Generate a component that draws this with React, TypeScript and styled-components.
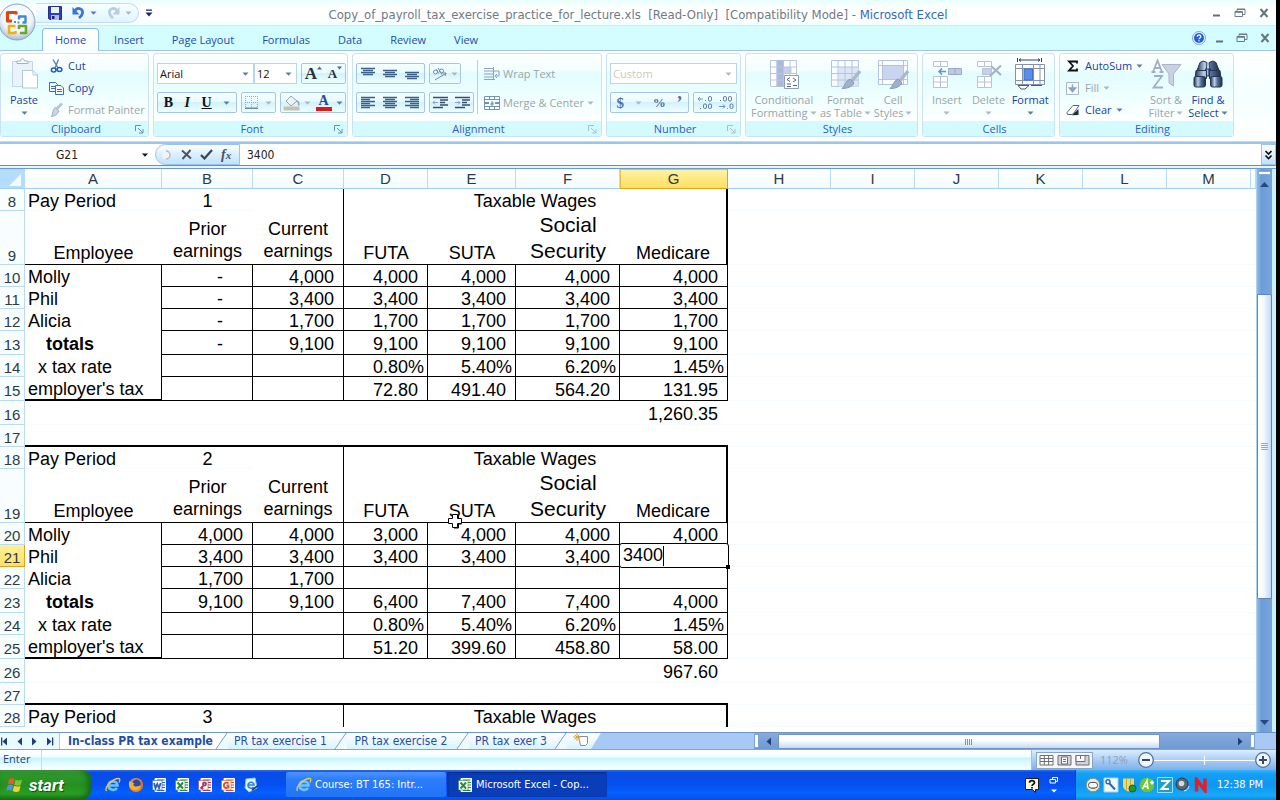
import React from 'react';
import styled, { createGlobalStyle, css } from 'styled-components';

const UI = '"Open Sans", "Noto Sans", sans-serif';
const TAHOMA = '"DejaVu Sans Condensed", "DejaVu Sans", sans-serif';
const ARIAL = '"Liberation Sans", Arial, sans-serif';

const Global = createGlobalStyle`
  *, *::before, *::after { box-sizing: border-box; }
  html, body { margin: 0; height: 100%; background: #fff; }
  body { font: 11px/14px ${UI}; color: #153f96; }
  button, input, select { font: inherit; color: inherit; margin: 0; padding: 0; border: 0; border-radius: 0; background: none; }
  svg { display: block; flex: none; }
`;

const Window = styled.div`
  position: relative;
  display: flex;
  flex-direction: column;
  height: 100vh;
  overflow: hidden;
  border-right: 4px solid #000;
`;

/* ---------- title bar ---------- */
const TitleBar = styled.header`
  display: grid;
  grid-template-columns: 1fr auto 1fr;
  align-items: center;
  height: 26px;
  background: linear-gradient(#e9ffff, #fff 30%, #fff 70%, #f4ffff);
  border-bottom: 1px solid #d3e9f7;
`;
const QuickAccess = styled.div`
  display: flex;
  align-items: center;
  justify-self: start;
  gap: 6px;
  margin-left: 36px;
`;
const QuickPill = styled.div`
  display: flex;
  align-items: center;
  gap: 5px;
  height: 20px;
  width: 103px;
  padding-left: 12px;
  border: 1px solid #c3dcf3;
  border-left: 0;
  border-radius: 0 10px 10px 0;
  background: linear-gradient(#f7ffff, #dff6ff);
`;
const IconButton = styled.button`
  display: flex;
  align-items: center;
  justify-content: center;
`;
const Title = styled.h1`
  margin: 0;
  padding-top: 4px;
  font: 13px/20px ${TAHOMA};
  color: #6f7a86;
  white-space: pre;
  b { font-weight: 400; color: #2f68c4; }
`;
const WindowButtons = styled.div`
  display: flex;
  align-items: center;
  justify-self: end;
  gap: 13px;
  padding-right: 7px;
`;

/* ---------- ribbon ---------- */
const TabRow = styled.nav`
  display: flex;
  align-items: flex-end;
  gap: 2px;
  height: 25px;
  padding-left: 42px;
  background: #d4fdff;
  border-bottom: 1px solid #9fc4ea;
`;
const RibbonTab = styled.button<{ $active?: boolean }>`
  height: 23px;
  padding: 0 12px;
  margin-bottom: -1px;
  border: 1px solid transparent;
  border-bottom: 0;
  color: #1d4bab;
  ${p => p.$active && css`
    border-color: #8db9ec;
    border-radius: 4px 4px 0 0;
    background: linear-gradient(#fff, #f6ffff);
  `}
`;
const TabRight = styled.div`
  display: flex;
  align-items: center;
  align-self: center;
  gap: 9px;
  margin-left: auto;
  ${WindowButtons} { gap: 12px; padding-right: 6px; }
`;
const Ribbon = styled.div`
  display: flex;
  gap: 4px;
  height: 91px;
  padding: 2px 0 5px;
  background: linear-gradient(#fff, #f5ffff 50%, #fff);
  border-bottom: 1px solid #bcdcf5;
`;
const GroupBox = styled.section<{ $w: number }>`
  display: flex;
  flex-direction: column;
  width: ${p => p.$w}px;
  height: 84px;
  border: 1px solid #c9e2f4;
  border-radius: 3px;
  background: linear-gradient(#fdffff, #f2feff 20%, #e2fcff 24%, #f0ffff 55%, #fff 82%);
  overflow: hidden;
`;
const GroupBody = styled.div<{ $pad?: number }>`
  display: flex;
  flex: 1;
  padding: 0 ${p => p.$pad ?? 3}px;
`;
const GroupLabel = styled.footer`
  display: flex;
  align-items: center;
  height: 15px;
  padding: 1px 4px 0 16px;
  background: #d3fbff;
  color: #2a5fc4;
  span { flex: 1; text-align: center; }
`;
const Large = styled.button<{ $w: number; $off?: boolean }>`
  display: flex;
  flex-direction: column;
  align-items: center;
  width: ${p => p.$w}px;
  padding-top: 4px;
  line-height: 13px;
  white-space: nowrap;
  color: ${p => (p.$off ? '#9aa5a8' : '#173f9c')};
  svg { margin-bottom: 3px; }
  i svg { margin: 0; }
`;
const DropLine = styled.i`
  display: flex;
  align-items: center;
  justify-content: center;
  gap: 2px;
  min-height: 13px;
  font-style: normal;
`;
const SmallList = styled.div<{ $w: number }>`
  display: flex;
  flex-direction: column;
  width: ${p => p.$w}px;
  padding: 1px 0 0 2px;
`;
const Small = styled.button<{ $off?: boolean }>`
  display: flex;
  align-items: center;
  gap: 4px;
  height: 22px;
  white-space: nowrap;
  color: ${p => (p.$off ? '#9aa5a8' : '#173f9c')};
`;
const Rows = styled.div`
  display: flex;
  flex-direction: column;
  gap: 8px;
  padding-top: 9px;
`;
const Row = styled.div`
  display: flex;
  gap: 4px;
`;
const Cluster = styled.div<{ $w: number }>`
  display: flex;
  align-items: center;
  justify-content: space-around;
  width: ${p => p.$w}px;
  height: 21px;
  border: 1px solid #a5c6e8;
  border-radius: 2px;
  background: linear-gradient(#f4ffff, #e8fbff 45%, #d5f1fc 50%, #ecffff);
`;
const Combo = styled.label<{ $w: number; $off?: boolean }>`
  display: flex;
  align-items: center;
  width: ${p => p.$w}px;
  height: 21px;
  padding-right: 4px;
  border: 1px solid #b7d5ee;
  background: #fff;
  color: ${p => (p.$off ? '#cfc8b8' : '#111')};
  select { appearance: none; flex: 1; min-width: 0; padding-left: 2px; outline: 0; opacity: 1; }
  & + & { margin-left: -4px; }
`;
const Glyph = styled.span<{ $italic?: boolean; $under?: boolean; $size?: number; $color?: string }>`
  font: ${p => (p.$italic ? 'italic ' : '')}bold ${p => p.$size ?? 13}px/16px "Liberation Serif", serif;
  color: ${p => p.$color ?? '#111'};
  text-decoration: ${p => (p.$under ? 'underline' : 'none')};
`;
const Divider = styled.div`
  width: 1px;
  height: 54px;
  margin: 6px 6px 0 3px;
  background: #b7cfe6;
`;
const SideRows = styled(Rows)`
  button { height: 21px; gap: 3px; }
`;

/* ---------- formula bar ---------- */
const FormulaBar = styled.div`
  display: flex;
  height: 24px;
  border-top: 2px solid #9fc4ea;
  border-bottom: 1px solid #5f91c8;
  background: #fff;
`;
const NameBox = styled.label`
  display: flex;
  align-items: center;
  width: 155px;
  padding-right: 6px;
  input { flex: 1; min-width: 0; text-align: center; padding-right: 7px; outline: 0; color: #222; font: 12px/16px ${TAHOMA}; }
`;
const FormulaButtons = styled.div`
  display: flex;
  align-items: center;
  gap: 8px;
  width: 85px;
  padding-left: 5px;
  border: 1px solid #9cc3ea;
  border-radius: 11px 0 0 11px;
  background: linear-gradient(#fff, #d9efff 50%, #c2e2fb);
`;
const FormulaField = styled.label`
  display: flex;
  flex: 1;
  padding-left: 7px;
  input { flex: 1; min-width: 0; outline: 0; color: #222; font: 12px/16px ${TAHOMA}; }
`;
const Expand = styled.div`
  display: flex;
  justify-content: center;
  width: 15px;
  border: 1px solid #9cc3ea;
  background: linear-gradient(#fff, #bfe0fb);
`;
const Seam = styled.div`
  height: 3px;
  background: #e4f6ff;
  border-bottom: 1px solid #6b9bd0;
`;

/* ---------- worksheet ---------- */
const SheetArea = styled.main`
  display: flex;
  flex: 1 1 0;
  min-height: 0;
`;
const GridPane = styled.div`
  flex: 1;
  min-width: 0;
  overflow: hidden;
`;
const Grid = styled.table`
  width: 100%;
  table-layout: fixed;
  border-collapse: separate;
  border-spacing: 0;
  font: 18px/18px ${ARIAL};
  color: #000;
`;
const ColHead = styled.th<{ $on?: boolean }>`
  height: 20px;
  padding: 0;
  font: 15px/18px ${ARIAL};
  color: #2b3b45;
  border-right: 1px solid #b9dcf2;
  border-bottom: 1px solid #a8cdea;
  background: linear-gradient(#fff, #f2fcff);
  overflow: hidden;
  ${p => p.$on && css`
    background: linear-gradient(#fff3a8, #ffdf5e);
    border-color: #d9a520;
    box-shadow: inset 0 1px #e8bf4a, inset 1px 0 #e8bf4a;
  `}
`;
const Corner = styled(ColHead)`
  background: #b4dcfb;
  svg { margin: 3px 3px 0 auto; }
`;
const RowHead = styled.th<{ $on?: boolean; $tall?: boolean }>`
  padding: 3px 0 0;
  font: 15px/17px ${ARIAL};
  color: #2b3b45;
  vertical-align: ${p => (p.$tall ? 'bottom' : 'middle')};
  border-right: 1px solid #b9dcf2;
  border-bottom: 1px solid #b9dcf2;
  background: #f8feff;
  ${p => p.$on && css`
    background: linear-gradient(#fff09a, #ffe06a);
    border-color: #d9a520;
  `}
`;
type CellStyle = {
  $align?: 'left' | 'right' | 'center';
  $pad?: number;
  $r?: 0 | 1 | 2;
  $b?: 0 | 1 | 2;
  $bold?: boolean;
  $bottom?: number;
  $lh?: number;
  $big?: boolean;
};
const Cell = styled.td<CellStyle>`
  position: relative;
  padding: ${p => (p.$lh ? 0 : 2)}px 0 ${p => p.$bottom ?? 0}px;
  white-space: pre;
  text-align: ${p => p.$align ?? 'left'};
  padding-left: ${p => (p.$align === 'right' || p.$align === 'center' ? 0 : p.$pad ?? 3)}px;
  padding-right: ${p => (p.$align === 'right' ? p.$pad ?? 10 : 0)}px;
  vertical-align: ${p => (p.$lh ? 'bottom' : 'middle')};
  line-height: ${p => p.$lh ?? 18}px;
  font-size: ${p => (p.$big ? 21 : 18)}px;
  font-weight: ${p => (p.$bold ? 700 : 400)};
  border-right: ${p => (p.$r ? `${p.$r}px solid #000` : '0')};
  border-bottom: ${p => (p.$b ? `${p.$b}px solid #000` : p.$r ? '0' : '1px solid #f5fbfe')};
`;
const Tr = styled.tr<{ $h: number }>`
  height: ${p => p.$h}px;
`;
const EditBox = styled.label`
  position: absolute;
  z-index: 1;
  inset: -2px -2px -2px -1px;
  display: flex;
  align-items: center;
  padding-left: 3px;
  border: 1px solid #000;
  border-radius: 3px;
  background: #fff;
  &::after { content: ''; position: absolute; right: -2px; bottom: -2px; width: 4px; height: 4px; background: #000; }
  input { width: 41px; height: 20px; border-right: 1px solid #000; outline: 0; }
`;
const Pointer = styled.svg`
  position: absolute;
  left: 447px;
  top: 513px;
`;

const VScroll = styled.aside`
  display: flex;
  flex-direction: column;
  align-items: center;
  width: 20px;
  padding: 2px 0 5px;
  border-left: 1px solid #a9d3f3;
  border-right: 4px solid #c9f1ff;
  background: linear-gradient(90deg, #8fb9e8, #6c9cd8 30%, #78a5dc);
`;
const SplitBox = styled.span`
  width: 13px;
  height: 4px;
  margin-bottom: 5px;
  border: 1px solid #88a9cc;
  background: #fff;
`;
const Track = styled.div`
  flex: 1;
  align-self: stretch;
  display: flex;
  flex-direction: column;
`;
const VThumb = styled.div`
  display: flex;
  align-items: center;
  justify-content: center;
  flex: 305;
  border: 1px solid #5f86bb;
  border-radius: 1px;
  background: linear-gradient(90deg, #fff, #f3f8ff 45%, #c3d9f5);
`;
const Gap = styled.div<{ $f: number }>`
  flex: ${p => p.$f};
`;

/* ---------- sheet tabs ---------- */
const TabBar = styled.div`
  display: flex;
  height: 17px;
  border-top: 1px solid #6b93c4;
  background: #a8c9f6;
  font: 12px/16px ${TAHOMA};
  color: #1f4fa8;
`;
const NavButtons = styled.div`
  display: flex;
  align-items: center;
  gap: 6px;
  width: 60px;
  background: #e9fbff;
  border-right: 1px solid #a9c9ec;
`;
const SheetTab = styled.button<{ $active?: boolean; $w: number }>`
  position: relative;
  width: ${p => p.$w}px;
  height: 16px;
  text-align: center;
  background: ${p => (p.$active ? '#fff' : 'linear-gradient(#fff, #d9f3ff)')};
  font-weight: ${p => (p.$active ? 700 : 400)};
  white-space: nowrap;
`;
const TabEdge = styled.svg`
  position: absolute;
  left: -6px;
  top: 0;
  z-index: 1;
`;
const NewTab = styled(SheetTab)`
  display: flex;
  justify-content: center;
  clip-path: polygon(-10px -2px, 100% -2px, calc(100% - 11px) 100%, -10px 100%);
`;
const HScroll = styled.div`
  display: flex;
  align-items: center;
  gap: 5px;
  width: 501px;
  margin-left: auto;
  margin-right: 21px;
  background: linear-gradient(#86aadb, #6f9ad4);
`;
const Splitter = styled.span`
  width: 5px;
  height: 14px;
  border: 1px solid #7fa3cf;
  background: #fff;
`;
const HTrack = styled.div`
  display: flex;
  flex: 1;
  height: 16px;
`;
const HThumb = styled.div`
  display: flex;
  align-items: center;
  justify-content: center;
  flex: 386;
  margin-top: 1px;
  border: 1px solid #6f93c3;
  border-radius: 1px;
  background: linear-gradient(#fff 40%, #c3d9f5);
`;

/* ---------- status bar ---------- */
const StatusBar = styled.footer`
  display: flex;
  align-items: stretch;
  height: 21px;
  border-top: 1px solid #7fa5d6;
  background: linear-gradient(#fff, #f2feff 35%, #c5f2fb 40%, #d9faff 60%, #fff);
`;
const Mode = styled.span`
  width: 42px;
  padding: 1px 0 0 3px;
  border-right: 1px solid #c0dff0;
  line-height: 15px;
`;
const StatusRight = styled.div`
  display: flex;
  align-items: center;
  gap: 7px;
  margin-left: auto;
  width: 245px;
  padding: 0 5px 0 4px;
  border-left: 1px solid #9ec2ea;
  background: linear-gradient(#dbeeff, #a9cdf5 50%, #7fb0ea);
  color: #8f9fb4;
`;
const Views = styled.div`
  display: flex;
  flex: none;
  align-items: center;
  justify-content: space-around;
  width: 57px;
  height: 17px;
  border: 1px solid #88a4c6;
  background: #f5f6f8;
`;
const Zoom = styled.div`
  display: flex;
  flex: 1;
  min-width: 0;
  align-items: center;
  margin-left: 3px;
  input { appearance: none; flex: 1; min-width: 0; height: 16px; background: linear-gradient(#fff, #fff) center / 100% 1px no-repeat; }
  input::-webkit-slider-thumb { appearance: none; width: 1px; height: 9px; background: #fff; }
`;

/* ---------- taskbar ---------- */
const Taskbar = styled.footer`
  display: flex;
  height: 30px;
  background: linear-gradient(#2d6ff0, #0a4be4 8%, #0450f0 50%, #0560ff 75%, #0450e8);
  color: #fff;
  font: 11px/14px ${TAHOMA};
`;
const StartBox = styled.div`
  display: flex;
  width: 92px;
  padding-left: 6px;
  border-radius: 0 10px 12px 0;
  background: linear-gradient(#5cae4c, #2f9a2e 12%, #23901f 50%, #2aa022 80%, #1a7016);
  box-shadow: inset -4px 0 6px #14661a;
  button { display: flex; align-items: center; gap: 5px; font: italic bold 17px/20px "Roboto", sans-serif; text-shadow: 1px 1px 1px #124a10; }
`;
const Launch = styled.div`
  display: flex;
  align-items: center;
  gap: 7px;
  padding-left: 13px;
  width: 194px;
`;
const Task = styled.div<{ $active?: boolean }>`
  display: flex;
  width: 160px;
  height: 25px;
  margin: 2px 1px 0 0;
  padding-left: 10px;
  border-radius: 2px;
  background: ${p => (p.$active ? '#0a3db8' : 'linear-gradient(#4b93ff, #2c7dfc 30%, #2374f5)')};
  box-shadow: ${p => (p.$active ? 'inset 1px 1px 2px #062a86' : 'none')};
  button { display: flex; align-items: center; gap: 3px; white-space: nowrap; }
`;
const Floating = styled.div`
  display: flex;
  align-items: center;
  gap: 10px;
  margin-left: auto;
  padding-right: 16px;
`;
const Tray = styled.div`
  display: flex;
  align-items: center;
  gap: 2px;
  width: 201px;
  padding-left: 9px;
  border-left: 1px solid #0a3fa8;
  background: linear-gradient(#38b6ff, #14a0f6 12%, #0f96f0 50%, #16aafc 85%, #0d8ae0);
  time { margin-left: 6px; white-space: nowrap; }
`;

/* ---------- icons ---------- */
const Arrow = ({ c = '#5c7ca8', w = 7 }: { c?: string; w?: number }) => (
  <svg width={w} height="4" viewBox="0 0 7 4"><path d="M0.5 0.5h6L3.5 3.7z" fill={c} /></svg>
);
const Tri = ({ dir, c = '#1f3f7c', bar }: { dir: 'l' | 'r' | 'u' | 'd'; c?: string; bar?: boolean }) => (
  <svg width="9" height="9" viewBox="0 0 9 9" fill={c}>
    {dir === 'l' && <path d="M7 0.5v8L2.5 4.5z" />}
    {dir === 'r' && <path d="M2 0.5v8L6.5 4.5z" />}
    {dir === 'u' && <path d="M0 7h9L4.5 2z" />}
    {dir === 'd' && <path d="M0 2h9L4.5 7z" />}
    {bar && <path d={dir === 'l' ? 'M1 0.5h1.3v8H1z' : 'M7 0.5h1.3v8H7z'} />}
  </svg>
);
const Launcher = ({ off }: { off?: boolean }) => (
  <svg width="9" height="9" viewBox="0 0 9 9" fill="none" stroke={off ? '#a9bfd0' : '#6c8cae'}>
    <path d="M0.5 6V0.5H6M3 3l4.5 4.5M8 4v4H4" />
  </svg>
);
const WinMin = () => <svg width="9" height="9" viewBox="0 0 9 9"><path d="M1 7.5h7" stroke="#62707e" strokeWidth="2" /></svg>;
const WinRestore = () => (
  <svg width="12" height="10" viewBox="0 0 12 10" fill="none" stroke="#6b7c8c"><path d="M3 3V1.5h8v5H9M3 1h8" /><path d="M1 3.5h7.5v5H1zM1 4.3h7.5" /></svg>
);
const WinClose = () => <svg width="10" height="10" viewBox="0 0 10 10"><path d="M1.5 1l7 8M8.5 1l-7 8" stroke="#66757f" strokeWidth="2" /></svg>;
const Help = () => (
  <svg width="14" height="14" viewBox="0 0 14 14"><circle cx="7" cy="7" r="6.5" fill="#e6f2ff" stroke="#7fa8e0" /><circle cx="7" cy="7" r="5" fill="#1f5fd8" /><path d="M5.2 5.7c0-2.4 3.7-2.2 3.6 0 0 1.300-1.800 1.300-1.800 2.600M7 9.300v1.200" fill="none" stroke="#fff" strokeWidth="1.3" /></svg>
);
const Save = () => (
  <svg width="14" height="14" viewBox="0 0 14 14"><path d="M0.5 0.5h13v13h-12l-1-1z" fill="#2f3fb0" stroke="#26308c" /><path d="M3 1h8v6H3z" fill="#e8f2ff" /><path d="M3 9h8v5H3z" fill="#aebce8" /><path d="M4 10h2.500v3H4z" fill="#1d2570" /></svg>
);
const Undo = ({ off, flip }: { off?: boolean; flip?: boolean }) => (
  <svg width="13" height="13" viewBox="0 0 13 13"><g transform={flip ? 'matrix(-1 0 0 1 13 0)' : undefined}><path d="M3 4.5C6 1 11 2.500 10.500 7c-.2 2-1.500 3.500-3.500 5" fill="none" stroke={off ? '#b9cde2' : '#3b74d6'} strokeWidth="2.8" /><path d="M0.500 1v7.500h7z" fill={off ? '#b9cde2' : '#3b74d6'} /></g></svg>
);
const Customize = () => <svg width="8" height="8" viewBox="0 0 8 8" fill="#1b2a66"><path d="M1 0.5h6v1.300H1zM0.500 3.500h7L4 7.500z" /></svg>;

const Orb = styled.button`
  position: absolute;
  left: -2px;
  top: 3px;
  z-index: 2;
`;
const OfficeLogo = () => (
  <svg width="38" height="38" viewBox="0 0 38 38">
    <defs>
      <radialGradient id="orb" cx="50%" cy="35%" r="65%"><stop offset="0" stopColor="#fff" /><stop offset=".65" stopColor="#eef4fa" /><stop offset="1" stopColor="#a9bdd3" /></radialGradient>
    </defs>
    <circle cx="19" cy="19" r="18" fill="url(#orb)" stroke="#8ba3bd" />
    <g fill="none" strokeLinejoin="round">
      <path d="M18 11.500V9.500H9.500v8.500H14" stroke="#d9480f" strokeWidth="3.200" />
      <path d="M21 16.500V13.500h6.500v6h-3" stroke="#3d8ad8" strokeWidth="2.400" />
      <path d="M17.500 23h-6.500v7h6.500V28" stroke="#f0b400" strokeWidth="2.600" />
      <path d="M21 26V23h7v7h-6" stroke="#6aa82c" strokeWidth="2.600" />
    </g>
    <path d="M16 18h2v2h-2zM19.500 18.500h2v2h-2z" fill="#4a8fd0" />
  </svg>
);
const PasteIcon = () => (
  <svg width="32" height="32" viewBox="0 0 32 32"><path d="M4.500 3.500h20v25h-20z" fill="#eaf3fb" stroke="#c5d6e6" /><path d="M9 5.500V3h3.500c0-3 4-3 4 0H20v2.500z" fill="#f8fbff" stroke="#9fb4cb" /><path d="M14.500 12.500H25l4.500 4.500v13h-15z" fill="#fff" stroke="#b3c7dc" /><path d="M25 12.500V17h4.500" fill="none" stroke="#b3c7dc" /></svg>
);
const Cut = () => (
  <svg width="15" height="14" viewBox="-1 0 15 14" fill="none"><path d="M3 0.500L8 9M8.500 0.500L5 9" stroke="#5f7fa8" strokeWidth="1.400" /><ellipse cx="3.700" cy="11" rx="2.300" ry="2" stroke="#1f5fc0" strokeWidth="1.600" /><ellipse cx="9.500" cy="10.500" rx="2.300" ry="2" stroke="#1f5fc0" strokeWidth="1.600" /></svg>
);
const Copy = () => (
  <svg width="15" height="13" viewBox="0 0 15 13" fill="#f3f9ff" stroke="#3d6db5"><path d="M0.500 0.500h6l2 2v7h-8zM2 4.500h4M2 6.500h4" /><path d="M6.500 3.500h5.500l2.500 2.500v6.500h-8zM8 7.500h5M8 9.500h5" /></svg>
);
const Brush = () => (
  <svg width="15" height="14" viewBox="-1 0 15 14"><path d="M12 0.500L6.500 6" stroke="#b8c7d6" strokeWidth="3" /><path d="M5 4.500L9 8c-1.500 3.500-4 5-7.500 5.500C3 11 2.500 7 5 4.500z" fill="#c9d6e4" stroke="#9fb2c6" /></svg>
);
const Lines = ({ rows, c = '#3b5f86' }: { rows: [number, number, number][]; c?: string }) => (
  <svg width="15" height="15" viewBox="0 0 15 15" stroke={c} strokeWidth="1.300">{rows.map(([x, y, w], i) => <path key={i} d={`M${x} ${y + 0.5}h${w}`} />)}</svg>
);
const Orient = () => (
  <svg width="15" height="15" viewBox="0 0 15 15" fill="none" stroke="#6c8bb0"><circle cx="3.500" cy="6" r="2" /><path d="M4.500 3.500l2.300 4M6 2l4 6.500" /><circle cx="9.500" cy="5" r="2" /><path d="M3 14L13.500 7.500M10.500 7h3.500l-1 3" /></svg>
);
const Indent = ({ out }: { out?: boolean }) => (
  <svg width="17" height="13" viewBox="0 0 17 13" fill="none" stroke="#35506f"><path d="M1 1.500h15M8 4h8M8 6.500h5M8 9h8M1 11.500h10" strokeWidth="1.300" /><path d={out ? 'M6 6.500H1M3 4.500l-2 2 2 2' : 'M1 6.500h5M4 4.500l2 2-2 2'} stroke="#7fa3d8" /></svg>
);
const Borders = () => (
  <svg width="13" height="13" viewBox="0 0 13 13"><path d="M0.500 0v12M6.500 0v12M12.500 0v12M0 0.500h13M0 6.500h13" stroke="#93a9c4" strokeDasharray="1 1" /><path d="M0 12.200h13" stroke="#6f88a8" strokeWidth="1.600" /></svg>
);
const Bucket = () => (
  <svg width="17" height="16" viewBox="0 0 17 16"><path d="M3 6l5-5 6 5-6 5z" fill="#eef3f8" stroke="#90a6c0" /><path d="M14 6c2 1 2 3 1.500 4.500" stroke="#90a6c0" strokeWidth="1.600" fill="none" /><path d="M0.500 11.500h16v4h-16z" fill="#c3c3ad" /></svg>
);
const FontColor = styled.span`
  width: 16px;
  height: 16px;
  border-bottom: 4px solid #e81414;
  text-align: center;
  font: bold 14px/12px "Liberation Serif", serif;
  color: #2348a0;
`;
const Grow = styled.span<{ $size: number }>`
  display: flex;
  align-items: flex-start;
  font: bold ${p => p.$size}px/16px "Liberation Serif", serif;
  color: #26303a;
`;
const Caret = ({ up }: { up?: boolean }) => <svg width="5" height="4" viewBox="0 0 5 4"><path d={up ? 'M0 3.500h5L2.500 0.500z' : 'M0 0.500h5L2.500 3.500z'} fill="#3f66ad" /></svg>;
const Wrap = () => (
  <svg width="16" height="14" viewBox="0 0 16 14" fill="none" stroke="#8ba3bb"><path d="M0 1.500h9M0 4h15M0 7h9M0 10h9M0 12.500h11" /><path d="M9.500 0v13M15 4v5h-4M13 7l-2 2 2 2" /></svg>
);
const Merge = () => (
  <svg width="16" height="14" viewBox="0 0 16 14" fill="none" stroke="#7a91ac"><path d="M0.500 0.500h15v13H0.500zM0 3.500h16M0 10.500h16M5.500 0v3.500M10.500 0v3.500M5.500 10.500V14M10.500 10.500V14" /><path d="M1 7h4M11 7h4" strokeWidth="2" /><path d="M7 6h2v3H7v-1.500h2" /></svg>
);
const Deci = ({ more }: { more?: boolean }) => (
  <svg width="16" height="15" viewBox="0 0 16 15" fill="none" stroke="#5a76a0">
    {more ? <><path d="M1 4h5M3 2L1 4l2 2M8 5.500h1" stroke="#6d92cc" /><rect x="11.500" y="1.500" width="3" height="4.500" rx="1.300" /><path d="M3 13.500h1" /><rect x="6.500" y="9" width="3" height="4.500" rx="1.300" /><rect x="11.500" y="9" width="3" height="4.500" rx="1.300" /></>
      : <><path d="M2 5.500h1" /><rect x="5.500" y="1.500" width="3" height="4.500" rx="1.300" /><rect x="10.500" y="1.500" width="3" height="4.500" rx="1.300" /><path d="M1 11.500h6M5 9.500l2 2-2 2M9 13.500h1" stroke="#6d92cc" /><rect x="12" y="9" width="3" height="4.500" rx="1.300" /></>}
  </svg>
);
const CondIcon = () => (
  <svg width="32" height="32" viewBox="0 0 32 32" fill="#fff" stroke="#b9c6de"><path d="M2.500 2.500h26v26h-26z" /><path d="M8.500 2.500h7v26h-7z" fill="#aab8da" stroke="none" /><path d="M15.500 9h8v6h-8z" fill="#c4cfe8" stroke="none" /><path d="M2.500 9h26M2.500 15.500h26M2.500 22h26M9 2.500v26M15.500 2.500v26M22 2.500v26" /><path d="M16.500 17.500h14v13h-14z" stroke="#8d9cb5" /><path d="M22 19.500l-3 2 3 2M19 26h4M25 20l3 2-3 2M19 28.500h4M25 27.500h4" fill="none" stroke="#56657c" /></svg>
);
const PaintStroke = <><path d="M31 13l-9 11" stroke="#a9b8cf" strokeWidth="3.500" /><path d="M21 21l4 4c-2 4-7 5.500-12 5.500 3-2 3.500-8 8-9.500z" fill="#9fb1cc" stroke="#8699b6" /></>;
const TableIcon = () => (
  <svg width="32" height="32" viewBox="0 0 32 32" fill="none" stroke="#b4c4de"><path d="M2.500 2.500h27v26h-27z" fill="#fafdff" /><path d="M9.500 9h20v19.500h-20z" fill="#dbe5f5" stroke="none" /><path d="M2.500 9h27M2.500 15.500h27M2.500 22h27M9 2.500v26M16 2.500v26M23 2.500v26" />{PaintStroke}</svg>
);
const StyleIcon = () => (
  <svg width="32" height="32" viewBox="0 0 32 32" fill="none" stroke="#b4c4de"><path d="M1.500 2.500h29v24h-29z" fill="#fafdff" /><path d="M5.500 7.500h21v14h-21z" fill="#c9d5ee" /><path d="M1.500 7.500h29M1.500 21.500h29M5.500 2.500v24M26.500 2.500v24" />{PaintStroke}</svg>
);
const InsertIcon = () => (
  <svg width="32" height="32" viewBox="0 0 32 32" fill="#fff" stroke="#b6c4d8"><path d="M2.500 3.500h14v5h-14zM9.500 3.500v5M2.500 18.500h14v11h-14zM9.500 18.500v11M2.500 24h14" /><path d="M17.500 10.500h13v6h-13zM24 10.500v6" fill="#c0c9e2" stroke="#9aa9c8" /><path d="M15 13.500H8M11 10.500l-3 3 3 3" fill="none" stroke="#6f8fbf" strokeWidth="1.500" /></svg>
);
const DeleteIcon = () => (
  <svg width="32" height="32" viewBox="0 0 32 32" fill="#fff" stroke="#b6c4d8"><path d="M4.500 3.500h14v5h-14zM11.500 3.500v5M4.500 18.500h14v11h-14zM11.500 18.500v11M4.500 24h14" /><path d="M9.500 10.500h9v6h-9z" fill="#c8d0e6" /><path d="M18 8l10 9M28 7.500L17 18" stroke="#a4b2cc" strokeWidth="2.200" /></svg>
);
const FormatIcon = () => (
  <svg width="32" height="32" viewBox="0 0 32 32" fill="#fff" stroke="#8592ad"><path d="M3.500 0v4M27.500 0v4M5 2h21M7 0.500L5 2l2 1.500M24 .5L26 2l-2 1.500" fill="none" stroke="#2d3e6b" /><path d="M1.500 6.500h29v20h-29z" /><path d="M1.500 10.500h29M1.500 22.500h29M8.500 6.500v20M19.500 6.500v20M26 6.500v20" /><path d="M10 11h8.500v11H10z" fill="#5b8ee8" stroke="#3f6fd0" /><path d="M4 27.500h11l-4 3.500H7zM17 27.500h11" stroke="#4c5870" /></svg>
);
const Sigma = () => <svg width="15" height="12" viewBox="0 0 15 12"><path d="M11 3.500V1.500H3L7 6l-4 4.500h8V8.500" fill="none" stroke="#111" strokeWidth="1.800" /></svg>;
const Fill = () => <svg width="15" height="13" viewBox="0 0 15 13"><path d="M0.500 0.500h12v12H0.500z" fill="#f6f9fc" stroke="#a9b9ca" /><path d="M6.500 2.500v6M3.500 6l3 3.500 3-3.500z" stroke="#8aa1c4" strokeWidth="1.500" fill="#8aa1c4" /></svg>;
const Eraser = () => <svg width="15" height="12" viewBox="0 0 15 12"><path d="M1 8.500L7 1.500h6L8 9l-2 1.500H1.500z" fill="#fff" stroke="#5a6470" /><path d="M6 11.300L12.500 5v6z" fill="#222c38" /></svg>;
const SortIcon = () => (
  <svg width="32" height="32" viewBox="0 0 32 32"><path d="M12 6.500h19L23.500 16v12L19 25v-9z" fill="#c9d1e2" stroke="#a9b5cc" /><g fill="none" stroke="#a0aec8" strokeWidth="1.800"><path d="M3 14L7.500 2.500 12 14M4.800 10h5.500M1.500 14h4M9.500 14h4M4 18h8L3.500 29.500H13" /></g></svg>
);
const Binoculars = () => (
  <svg width="32" height="32" viewBox="0 0 32 32"><defs><linearGradient id="bino"><stop offset="0" stopColor="#24344f" /><stop offset=".35" stopColor="#b9cfe8" /><stop offset=".6" stopColor="#54729c" /><stop offset="1" stopColor="#1e2a44" /></linearGradient></defs>
    <g fill="url(#bino)" stroke="#26354f"><path d="M8 4.500l3-1.500 4 1.500-.5 8H5zM24 4.500L21 3l-4 1.500.5 8H27z" /><path d="M13.500 11h5v7h-5z" /><path d="M4 12.500h10.500v8H3zM17.500 12.500H28l1 8H17.500z" /><rect x="2" y="18.500" width="11.500" height="10.500" rx="2" /><rect x="18.500" y="18.500" width="11.500" height="10.500" rx="2" /></g></svg>
);
const XIcon = () => <svg width="11" height="11" viewBox="0 0 11 11"><path d="M1 1.500l9 8M9.500 1L1.500 10" stroke="#4a545e" strokeWidth="1.900" /></svg>;
const Check = () => <svg width="13" height="11" viewBox="0 0 13 11"><path d="M1 6l3.500 3.500L12 1" stroke="#3c4650" strokeWidth="2.200" fill="none" /></svg>;
const Fx = styled.span`
  font: italic bold 14px/18px "Liberation Serif", serif;
  color: #46525e;
  small { font-size: 11px; }
`;
const Knob = () => <svg width="12" height="10" viewBox="0 0 12 10"><circle cx="5" cy="5" r="4" fill="#f2f4f8" /><path d="M5 1a4 4 0 0 1 0 8" fill="none" stroke="#b3bccb" strokeWidth="1.500" /></svg>;
const Chevrons = () => <svg width="9" height="10" viewBox="0 0 9 10" fill="none" stroke="#111" strokeWidth="1.700"><path d="M1.500 1l3 3 3-3M1.500 5.500l3 3 3-3" /></svg>;
const Round = ({ plus }: { plus?: boolean }) => (
  <svg width="16" height="16" viewBox="0 0 16 16"><circle cx="8" cy="8" r="7.300" fill="#eef5fd" stroke="#50709c" strokeWidth="1.200" /><path d={plus ? 'M4 8h8M8 4v8' : 'M4 8h8'} stroke="#35496b" strokeWidth="2" /></svg>
);
const ViewIcon = ({ k }: { k: number }) => (
  <svg width="15" height="12" viewBox="0 0 15 12" fill="#fff" stroke="#6b6f76"><path d="M1 1.500h13v9.500H1z" fill={k ? '#d3d4d6' : '#fff'} />
    {k === 0 && <path d="M1 4.500h13M1 7.500h13M5.300 1.500v9.500M9.600 1.500v9.500" />}
    {k === 1 && <path d="M4.500 3h6v7h-6zM6 5.500h3M6 7.500h3" />}
    {k === 2 && <path d="M1 1.500h9v6H1zM5.500 1.500v3.500" />}
  </svg>
);
const Edge = () => <TabEdge width="13" height="16" viewBox="0 0 13 16"><path d="M1 16L12 0h1v16z" fill="#eefaff" /><path d="M1 16L12 0" stroke="#7d9fca" /></TabEdge>;
const Flag = () => (
  <svg width="18" height="18" viewBox="0 0 18 18"><path d="M3 3.500C5 2 7 2 8.500 3.200L7.200 8.500C5.500 7.500 3.500 7.500 1.800 8.700z" fill="#f0562a" /><path d="M9.500 3.700c2 1 4 1 6.500 0L14.700 9c-2 1-4.500.8-6.500-.3z" fill="#7cc63a" /><path d="M1.500 9.700c2-1.200 4-1.200 5.500-.2l-1.300 5.300c-1.800-1-3.500-1-5.500.2z" fill="#4b93f0" /><path d="M8 9.800c2 1 4 1 6.500.2l-1.300 5.300c-2 1-4.500.8-6.500-.3z" fill="#f9cf30" /></svg>
);
const IE = () => (
  <svg width="16" height="16" viewBox="0 0 16 16" fill="none"><path d="M3.500 8.500h9c0-5-8.500-5.500-9 0 0 5 6.500 5.500 8.500 2.500" stroke="#6cc4ff" strokeWidth="2.600" /><path d="M1.500 14C-1 10 8 1.500 13.500 1.500c2 0 1.500 2 .5 4" stroke="#f2c744" strokeWidth="1.300" /></svg>
);
const Firefox = () => (
  <svg width="16" height="16" viewBox="0 0 16 16"><circle cx="8" cy="8" r="7" fill="#f08a1c" /><circle cx="8.500" cy="6.700" r="4.300" fill="#2b49a8" /><path d="M1.500 4c2 2 3 1 5 2.500-2 .5-1 3 1.500 3s3-1 4.500-1c-.5 4-6 6-9 3.500S.500 7 1.500 4z" fill="#f8b02c" /><path d="M13 2.500c2 3 2.500 8-1 10.500 2-4 1.500-7 1-10.500z" fill="#e8601a" /></svg>
);
const OfficeApp = ({ c, d }: { c: string; d: string }) => (
  <svg width="16" height="16" viewBox="0 0 16 16"><path d="M4 1.500h10.500v13H4z" fill="#f4f8fc" stroke="#fff" /><path d="M6 3h7.500M11 5.500h3M11 8h3M11 10.500h3M6 13.500h7.500" stroke={c} /><path d="M1.500 3.500h9.500v9.500H1.500z" fill="#fff" stroke={c} strokeOpacity=".6" /><path d={d} fill="none" stroke={c} strokeWidth="1.900" /></svg>
);
const W = 'M3 6l1.500 5L6.300 7l1.700 4L9.700 6', X = 'M3.500 5.500l5.500 6M9 5.500l-5.500 6', K = 'M3.500 11.500l3-3M4.500 10.500l1.500 1.500M6 7a1.500 1.500 0 1 0 3 0a1.500 1.500 0 1 0-3 0', P = 'M8.500 6.500a2.700 2.700 0 1 0 .5 3M6.500 8.500h3';
const Outlook = () => (
  <svg width="16" height="16" viewBox="0 0 16 16"><path d="M3 2l9-1 2 10-8 4-4-4z" fill="#e6f4ff" stroke="#8ac4f5" /><path d="M5 8h6c-.5-4-5.500-3.500-6 0 0 3.500 4 4 5.500 2" fill="none" stroke="#2c84d8" strokeWidth="1.600" /><path d="M9 13l5.500-4" stroke="#173f78" strokeWidth="1.600" /></svg>
);
const HelpNote = () => <svg width="14" height="16" viewBox="0 0 14 16"><path d="M0.500 1.500h13v11h-3v3l-3-3h-7z" fill="#fffbe0" stroke="#1b1b1b" /><path d="M4.500 5.700c0-3 5-2.700 5 0 0 1.600-2.500 1.600-2.500 3.300M7 10v1.500" fill="none" stroke="#111" strokeWidth="1.700" /></svg>;
const Restore = () => <svg width="10" height="18" viewBox="0 0 10 18" fill="none" stroke="#fff"><path d="M3.500 3V1.500h5v4H7M1 3.500h5.500v3.500H1z" /><path d="M2 13.500h6L5 16.500z" fill="#fff" stroke="none" /></svg>;
const TrayIcons = () => (
  <>
    <svg width="16" height="16" viewBox="0 0 16 16"><circle cx="8" cy="8" r="6.800" fill="#ece9dc" stroke="#8c8c78" /><rect x="3.500" y="5.500" width="9" height="5.500" rx="2.500" fill="#fff" stroke="#4b5a5c" /><path d="M6 11.500h4" stroke="#6c8a50" /></svg>
    <svg width="16" height="16" viewBox="0 0 16 16"><path d="M1 1h14v14H1z" fill="#f2f8ff" stroke="#a9cdee" /><path d="M6 6l6 6.500" stroke="#2468b4" strokeWidth="2" fill="none" /><circle cx="5" cy="4.800" r="2" fill="none" stroke="#2468b4" strokeWidth="1.400" /></svg>
    <svg width="16" height="16" viewBox="0 0 16 16"><path d="M2 1.500h11V8c0 4-3 6-5.500 6.500C5 14 2 12 2 8z" fill="#f8d84c" /><path d="M5.500 2v11M9.500 2v11" stroke="#b8a86c" /><circle cx="11.500" cy="11.500" r="3.500" fill="#1f9c2c" stroke="#0b6a18" /></svg>
    <svg width="16" height="16" viewBox="0 0 16 16"><circle cx="8" cy="8" r="7.300" fill="#6cc832" /><path d="M3.500 12L8 3.500l1 8.500M5 9.500h4M11 5.500h4M13 3.500v4" stroke="#fff" strokeWidth="1.600" fill="none" /></svg>
    <svg width="16" height="16" viewBox="0 0 16 16"><path d="M0.500 0.500h15v15H0.500z" fill="#1f9fd0" stroke="#8fe0ff" /><path d="M4 4h8L4.500 12H12" stroke="#fff" strokeWidth="2" fill="none" /></svg>
    <svg width="16" height="16" viewBox="0 0 16 16"><circle cx="7" cy="7" r="6" fill="#5d6670" stroke="#30363c" /><circle cx="6.500" cy="6.500" r="2.800" fill="#d4dae0" /><path d="M9 14c3-.5 4.500-2.500 5-5" stroke="#d9f0ff" fill="none" /></svg>
    <svg width="16" height="16" viewBox="0 0 16 16"><path d="M3.500 14.500V2.500L12 13.500V1.500" stroke="#e81c24" strokeWidth="3.400" fill="none" /></svg>
  </>
);

/* ---------- data ---------- */
const columns: [string, number][] = [['A', 137], ['B', 91], ['C', 91], ['D', 84], ['E', 88], ['F', 104], ['G', 108], ['H', 103], ['I', 84], ['J', 84], ['K', 84], ['L', 84], ['M', 84]];
type Period = { start: number; n: string; rows: string[][]; sum?: string; headOnly?: boolean };
const labels = ['Molly', 'Phil', 'Alicia', 'totals', 'x tax rate', "employer's tax"];
const heights = [22, 22, 22, 24, 22, 24];
const periods: Period[] = [
  {
    start: 8, n: '1', sum: '1,260.35', rows: [
      ['-', '4,000', '4,000', '4,000', '4,000', '4,000'],
      ['-', '3,400', '3,400', '3,400', '3,400', '3,400'],
      ['-', '1,700', '1,700', '1,700', '1,700', '1,700'],
      ['-', '9,100', '9,100', '9,100', '9,100', '9,100'],
      ['', '', '0.80%', '5.40%', '6.20%', '1.45%'],
      ['', '', '72.80', '491.40', '564.20', '131.95'],
    ],
  },
  {
    start: 18, n: '2', sum: '967.60', rows: [
      ['4,000', '4,000', '3,000', '4,000', '4,000', '4,000'],
      ['3,400', '3,400', '3,400', '3,400', '3,400', 'edit'],
      ['1,700', '1,700', '', '', '', ''],
      ['9,100', '9,100', '6,400', '7,400', '7,400', '4,000'],
      ['', '', '0.80%', '5.40%', '6.20%', '1.45%'],
      ['', '', '51.20', '399.60', '458.80', '58.00'],
    ],
  },
  { start: 28, n: '3', rows: [], headOnly: true },
];
const Rest = () => <>{Array.from({ length: 7 }, (_, i) => <Cell key={i} />)}</>;
const padFor = (v: string) => (v.endsWith('%') ? 3 : v === '-' ? 29 : 9);

const PeriodRows = ({ p }: { p: Period }) => (
  <>
    <Tr $h={22}>
      <RowHead scope="row">{p.start}</RowHead>
      <Cell>Pay Period</Cell><Cell $align="center">{p.n}</Cell><Cell $r={1} />
      <Cell colSpan={4} $align="center" $r={2}>Taxable Wages</Cell><Rest />
    </Tr>
    {!p.headOnly && (
      <>
        <Tr $h={54}>
          <RowHead scope="row" $tall>{p.start + 1}</RowHead>
          <Cell $align="center" $b={1} $lh={22}>Employee</Cell>
          <Cell $align="center" $b={1} $lh={22} $bottom={2}>{'Prior\nearnings'}</Cell>
          <Cell $align="center" $b={1} $lh={22} $bottom={2} $r={1}>{'Current\nearnings'}</Cell>
          <Cell $align="center" $b={1} $lh={22}>FUTA</Cell>
          <Cell $align="center" $b={1} $lh={22}>SUTA</Cell>
          <Cell $align="center" $b={1} $lh={26} $big>{'Social\nSecurity'}</Cell>
          <Cell $align="center" $b={1} $lh={22} $r={2}>Medicare</Cell>
          <Rest />
        </Tr>
        {p.rows.map((r, i) => (
          <Tr key={i} $h={heights[i]}>
            <RowHead scope="row" $on={r.includes('edit')}>{p.start + 2 + i}</RowHead>
            <Cell $r={1} $b={i === 5 ? 2 : 0} $bold={i === 3} $pad={i === 3 ? 21 : i === 4 ? 13 : 3}>{labels[i]}</Cell>
            {r.map((v, j) => (
              <Cell key={j} $r={1} $b={1} $align="right" $pad={padFor(v)}>
                {v === 'edit' ? <EditBox><input aria-label="G21" defaultValue="3400" /></EditBox> : v}
              </Cell>
            ))}
            <Rest />
          </Tr>
        ))}
        <Tr $h={24}>
          <RowHead scope="row">{p.start + 8}</RowHead>
          <Cell /><Cell /><Cell /><Cell /><Cell /><Cell /><Cell $align="right">{p.sum}</Cell><Rest />
        </Tr>
        <Tr $h={22}>
          <RowHead scope="row">{p.start + 9}</RowHead>
          {columns.slice(0, 7).map(([c]) => <Cell key={c} $b={2} />)}<Rest />
        </Tr>
      </>
    )}
  </>
);

const Group = ({ name, w, pad, launch, off, children }: { name: string; w: number; pad?: number; launch?: boolean; off?: boolean; children: React.ReactNode }) => (
  <GroupBox $w={w}>
    <GroupBody $pad={pad}>{children}</GroupBody>
    <GroupLabel><span>{name}</span>{launch && <IconButton aria-label={`${name} settings`}><Launcher off={off} /></IconButton>}</GroupLabel>
  </GroupBox>
);
const GREY = '#a9b8c6';
const Big = ({ icon, w, a, b, off }: { icon: React.ReactNode; w: number; a: string; b?: string; off?: boolean }) => (
  <Large $w={w} $off={off}>{icon}<span>{a}</span><DropLine>{b}<Arrow c={off ? GREY : undefined} /></DropLine></Large>
);

export default function App() {
  return (
    <Window>
      <Global />
      <Orb aria-label="Office"><OfficeLogo /></Orb>
      <TitleBar>
        <QuickAccess>
          <QuickPill>
            <IconButton aria-label="Save"><Save /></IconButton>
            <Gap $f={0} />
            <IconButton aria-label="Undo"><Undo /></IconButton><Arrow />
            <Gap $f={0} />
            <IconButton aria-label="Redo"><Undo off flip /></IconButton><Arrow c={GREY} />
          </QuickPill>
          <IconButton aria-label="Customize"><Customize /></IconButton>
        </QuickAccess>
        <Title>{'Copy_of_payroll_tax_exercise_practice_for_lecture.xls  [Read-Only]  [Compatibility Mode] - '}<b>Microsoft Excel</b></Title>
        <WindowButtons>
          <IconButton aria-label="Minimize"><WinMin /></IconButton>
          <IconButton aria-label="Restore"><WinRestore /></IconButton>
          <IconButton aria-label="Close"><WinClose /></IconButton>
        </WindowButtons>
      </TitleBar>
      <TabRow>
        {['Home', 'Insert', 'Page Layout', 'Formulas', 'Data', 'Review', 'View'].map((t, i) => <RibbonTab key={t} $active={i === 0}>{t}</RibbonTab>)}
        <TabRight>
          <IconButton aria-label="Help"><Help /></IconButton>
          <WindowButtons>
            <IconButton aria-label="Minimize workbook"><WinMin /></IconButton>
            <IconButton aria-label="Restore workbook"><WinRestore /></IconButton>
            <IconButton aria-label="Close workbook"><WinClose /></IconButton>
          </WindowButtons>
        </TabRight>
      </TabRow>
      <Ribbon>
        <Group name="Clipboard" w={149} pad={0} launch>
          <Big icon={<PasteIcon />} w={46} a="Paste" />
          <SmallList $w={98}>
            <Small><Cut />Cut</Small>
            <Small><Copy />Copy</Small>
            <Small $off><Brush />Format Painter</Small>
          </SmallList>
        </Group>
        <Group name="Font" w={195} launch>
          <Rows>
            <Row>
              <Combo $w={97}><select aria-label="Font"><option>Arial</option></select><Arrow /></Combo>
              <Combo $w={43}><select aria-label="Font size"><option>12</option></select><Arrow /></Combo>
              <Cluster $w={45}><Grow $size={17}>A<Caret up /></Grow><Grow $size={13}>A<Caret /></Grow></Cluster>
            </Row>
            <Row>
              <Cluster $w={80}><IconButton><Glyph $size={14}>B</Glyph></IconButton><IconButton><Glyph $italic $size={14}>I</Glyph></IconButton><IconButton><Glyph $under $size={14}>U</Glyph></IconButton><Arrow /></Cluster>
              <Cluster $w={35}><Borders /><Arrow c={GREY} /></Cluster>
              <Cluster $w={66}><Bucket /><Arrow c={GREY} /><FontColor>A</FontColor><Arrow /></Cluster>
            </Row>
          </Rows>
        </Group>
        <Group name="Alignment" w={250} launch off>
          <Rows>
            <Row>
              <Cluster $w={69}>
                <Lines rows={[[0, 2, 14], [2, 4, 10], [0, 6, 14], [2, 8, 10]]} /><Lines rows={[[0, 4, 14], [2, 6, 10], [0, 8, 14], [2, 10, 10]]} /><Lines rows={[[0, 6, 14], [2, 8, 10], [0, 10, 14], [2, 12, 10]]} />
              </Cluster>
              <Cluster $w={32}><Orient /><Arrow c={GREY} /></Cluster>
            </Row>
            <Row>
              <Cluster $w={69}>
                <Lines rows={[[0, 2, 14], [0, 4, 9], [0, 6, 14], [0, 8, 9], [0, 10, 14], [0, 12, 9]]} /><Lines rows={[[0, 2, 14], [2, 4, 10], [0, 6, 14], [2, 8, 10], [0, 10, 14], [2, 12, 10]]} /><Lines rows={[[0, 2, 14], [5, 4, 9], [0, 6, 14], [5, 8, 9], [0, 10, 14], [5, 12, 9]]} />
              </Cluster>
              <Cluster $w={45}><Indent out /><Indent /></Cluster>
            </Row>
          </Rows>
          <Divider />
          <SideRows>
            <Small $off><Wrap />Wrap Text</Small>
            <Small $off><Merge />Merge &amp; Center <Arrow c={GREY} /></Small>
          </SideRows>
        </Group>
        <Group name="Number" w={135} launch off>
          <Rows>
            <Combo $w={127} $off><select aria-label="Number format"><option>Custom</option></select><Arrow c={GREY} /></Combo>
            <Row>
              <Cluster $w={79}><Glyph $color="#5470a0" $size={15}>$</Glyph><Arrow c={GREY} /><Glyph $color="#5470a0">%</Glyph><Glyph $color="#5470a0" $size={18}>’</Glyph></Cluster>
              <Cluster $w={44}><Deci more /><Deci /></Cluster>
            </Row>
          </Rows>
        </Group>
        <Group name="Styles" w={173}>
          <Big off icon={<CondIcon />} w={70} a="Conditional" b="Formatting" />
          <Big off icon={<TableIcon />} w={54} a="Format" b="as Table" />
          <Big off icon={<StyleIcon />} w={42} a="Cell" b="Styles" />
        </Group>
        <Group name="Cells" w={133}>
          <Big off icon={<InsertIcon />} w={42} a="Insert" />
          <Big off icon={<DeleteIcon />} w={42} a="Delete" />
          <Big icon={<FormatIcon />} w={42} a="Format" />
        </Group>
        <Group name="Editing" w={175} pad={4}>
          <SmallList $w={81}>
            <Small><Sigma />AutoSum <Arrow /></Small>
            <Small $off><Fill />Fill <Arrow c={GREY} /></Small>
            <Small><Eraser />Clear <Arrow /></Small>
          </SmallList>
          <Big off icon={<SortIcon />} w={42} a="Sort &" b="Filter" />
          <Big icon={<Binoculars />} w={42} a="Find &" b="Select" />
        </Group>
      </Ribbon>
      <FormulaBar>
        <NameBox><input aria-label="Name box" defaultValue="G21" /><Arrow c="#111" w={8} /></NameBox>
        <FormulaButtons><Knob /><IconButton aria-label="Cancel"><XIcon /></IconButton><IconButton aria-label="Enter"><Check /></IconButton><IconButton aria-label="Insert function"><Fx>f<small>x</small></Fx></IconButton></FormulaButtons>
        <FormulaField><input aria-label="Formula" defaultValue="3400" /></FormulaField>
        <Expand><IconButton aria-label="Expand formula bar"><Chevrons /></IconButton></Expand>
      </FormulaBar>
      <Seam />
      <SheetArea>
        <GridPane>
          <Grid>
            <colgroup><col width="25" />{columns.map(([c, w]) => <col key={c} width={w} />)}<col /></colgroup>
            <thead>
              <Tr $h={20}>
                <Corner aria-label="Select all"><svg width="12" height="12" viewBox="0 0 12 12"><path d="M12 0v12H0z" fill="#f4fbff" /></svg></Corner>
                {columns.map(([c]) => <ColHead key={c} scope="col" $on={c === 'G'}>{c}</ColHead>)}<ColHead />
              </Tr>
            </thead>
            <tbody>{periods.map(p => <PeriodRows key={p.n} p={p} />)}</tbody>
          </Grid>
        </GridPane>
        <VScroll>
          <SplitBox /><Tri dir="u" c="#26487c" />
          <Track>
            <Gap $f={105} />
            <VThumb><svg width="7" height="8" viewBox="0 0 7 8" stroke="#93a9c8"><path d="M0 .5h7M0 2.500h7M0 4.500h7M0 6.500h7" /></svg></VThumb>
            <Gap $f={119} />
          </Track>
          <Tri dir="d" c="#26487c" />
        </VScroll>
      </SheetArea>
      <TabBar>
        <NavButtons>
          <IconButton aria-label="First sheet"><Tri dir="l" bar /></IconButton><IconButton aria-label="Previous sheet"><Tri dir="l" /></IconButton>
          <IconButton aria-label="Next sheet"><Tri dir="r" /></IconButton><IconButton aria-label="Last sheet"><Tri dir="r" bar /></IconButton>
        </NavButtons>
        <SheetTab $active $w={161}>In-class PR tax example</SheetTab>
        <SheetTab $w={119}><Edge />PR tax exercise 1</SheetTab>
        <SheetTab $w={122}><Edge />PR tax exercise 2</SheetTab>
        <SheetTab $w={98}><Edge />PR tax exer 3</SheetTab>
        <NewTab $w={42} aria-label="Insert worksheet"><Edge /><svg width="17" height="14" viewBox="0 0 17 14"><path d="M5.500 3.500h9v7l-2 2h-5z" fill="#fff" stroke="#7a8fb0" /><path d="M4 0v8M0 4h8M1.500 1.500l5 5M6.500 1.500l-5 5" stroke="#e8a52c" /></svg></NewTab>
        <HScroll>
          <Splitter /><Tri dir="l" />
          <HTrack>
            <HThumb><svg width="8" height="6" viewBox="0 0 8 6" stroke="#7c93b3"><path d="M.5 0v6M2.500 0v6M4.500 0v6M6.500 0v6" /></svg></HThumb>
            <Gap $f={72} />
          </HTrack>
          <Tri dir="r" /><Splitter />
        </HScroll>
      </TabBar>
      <StatusBar>
        <Mode>Enter</Mode>
        <StatusRight>
          <Views>{[0, 1, 2].map(k => <IconButton key={k} aria-label={['Normal', 'Page layout', 'Page break preview'][k]}><ViewIcon k={k} /></IconButton>)}</Views>
          <span>112%</span>
          <Zoom>
            <IconButton aria-label="Zoom out"><Round /></IconButton>
            <input type="range" aria-label="Zoom" min="0" max="100" defaultValue="50" />
            <IconButton aria-label="Zoom in"><Round plus /></IconButton>
          </Zoom>
        </StatusRight>
      </StatusBar>
      <Taskbar>
        <StartBox><button><Flag />start</button></StartBox>
        <Launch><IE /><Firefox /><OfficeApp c="#2f62b8" d={W} /><OfficeApp c="#2c8a3c" d={X} /><OfficeApp c="#a83a5c" d={K} /><OfficeApp c="#d8552c" d={P} /><Outlook /></Launch>
        <Task><button><IE />Course: BT 165: Intr...</button></Task>
        <Task $active><button><OfficeApp c="#2c8a3c" d={X} />Microsoft Excel - Cop...</button></Task>
        <Floating><HelpNote /><Restore /></Floating>
        <Tray><TrayIcons /><time>12:38 PM</time></Tray>
      </Taskbar>
      <Pointer width="16" height="16" viewBox="0 0 16 16"><path d="M5.500 1.500h5v4h4v5h-4v4h-5v-4h-4v-5h4z" fill="#fff" stroke="#000" /><path d="M11.500 3v2M14.500 11h-3v4H7" fill="none" stroke="#000" /></Pointer>
    </Window>
  );
}
